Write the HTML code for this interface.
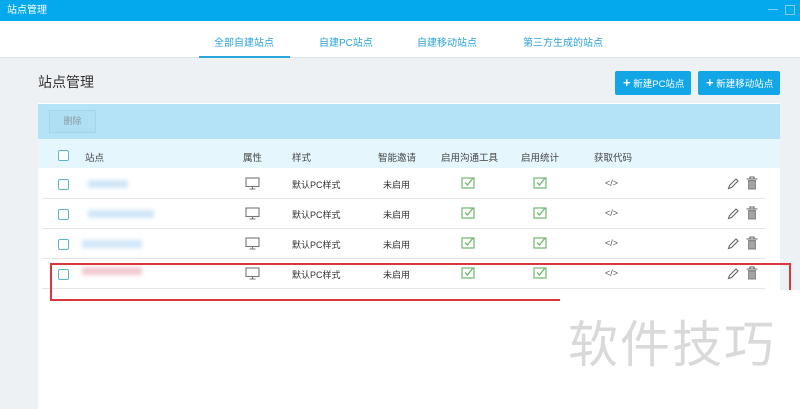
<!DOCTYPE html>
<html><head><meta charset="utf-8"><style>
*{margin:0;padding:0;box-sizing:border-box}
body{width:800px;height:409px;overflow:hidden;background:#eef1f4;font-family:"Liberation Sans","Noto Sans CJK SC",sans-serif;font-size:10px;color:#333;position:relative}
.a{position:absolute}
.tb{left:0;top:0;width:800px;height:21px;background:#03a9ec;color:#fff;font-size:10px;line-height:21px;padding-left:7px}
.tabs{left:0;top:21px;width:800px;height:37px;background:#fff;border-bottom:1px solid #dde3e8}
.tab{top:34px;color:#2aa2d8;font-size:10px}
.btn{top:71px;height:24px;background:#13a6e6;color:#fff;border-radius:2px;font-size:9.5px;line-height:24px}
.panel{left:38px;top:103px;width:742px;height:306px;background:#fff}
.cb{width:11px;height:11px;border:1.3px solid #5bb8c2;border-radius:2px;background:#fff}
.line{height:1px;background:#e3e6e8;left:42px;width:723px}
.blur{background:#cfe6f7;filter:blur(2px);height:8px}
.h{top:150px;font-size:9.5px;color:#444}
</style></head><body>
<div class="a tb">站点管理</div>
<div class="a" style="right:22px;top:9px;width:10px;height:1px;background:#7fd0f3"></div>
<div class="a" style="right:5px;top:5px;width:10px;height:10px;border:1px solid #7fd0f3"></div>
<div class="a tabs"></div>
<div class="a tab" style="left:214px">全部自建站点</div>
<div class="a tab" style="left:319px">自建PC站点</div>
<div class="a tab" style="left:417px">自建移动站点</div>
<div class="a tab" style="left:523px">第三方生成的站点</div>
<div class="a" style="left:199px;top:56px;width:91px;height:2px;background:#2ba3db"></div>
<div class="a" style="left:38px;top:72px;font-size:14px;color:#333">站点管理</div>
<div class="a btn" style="left:615px;width:76px;padding-left:8px"><b style="font-size:13px">+</b> 新建PC站点</div>
<div class="a btn" style="left:698px;width:82px;padding-left:8px"><b style="font-size:13px">+</b> 新建移动站点</div>
<div class="a panel"></div>
<div class="a" style="left:38px;top:104px;width:742px;height:35px;background:#b4e3f7"></div>
<div class="a" style="left:49px;top:110px;width:47px;height:23px;background:#aedff2;border:1px solid #a3d5ea;color:#8a9aa4;font-size:9px;line-height:21px;text-align:center">删除</div>
<div class="a" style="left:38px;top:139px;width:742px;height:29px;background:#e6f6fd"></div>
<div class="a cb" style="left:58px;top:150px"></div>
<div class="a h" style="left:85px">站点</div>
<div class="a h" style="left:243px">属性</div>
<div class="a h" style="left:292px">样式</div>
<div class="a h" style="left:378px">智能邀请</div>
<div class="a h" style="left:441px">启用沟通工具</div>
<div class="a h" style="left:521px">启用统计</div>
<div class="a h" style="left:594px">获取代码</div>
<div class="a line" style="top:198px"></div>
<div class="a line" style="top:228px"></div>
<div class="a line" style="top:258px"></div>
<div class="a line" style="top:288px"></div>
<div class="a blur" style="left:88px;top:180px;width:40px"></div>
<div class="a blur" style="left:88px;top:210px;width:66px"></div>
<div class="a blur" style="left:82px;top:240px;width:60px"></div>
<div class="a blur" style="left:82px;top:267px;width:60px;background:#f0c8d0"></div>

<div class="a" id="r1" style="left:0;top:168px;width:800px;height:30px">
<div class="a cb" style="left:58px;top:11px"></div>
<svg class="a" style="left:245px;top:9px" width="15" height="13" viewBox="0 0 15 13"><rect x="1" y="1" width="13" height="8.5" fill="none" stroke="#777" stroke-width="1.1"/><path d="M7.5 9.5v2M4.5 12h6" stroke="#777" stroke-width="1.1"/></svg>
<div class="a" style="left:292px;top:10px;font-size:9px">默认PC样式</div>
<div class="a" style="left:383px;top:10px;font-size:9px">未启用</div>
<svg class="a" style="left:461px;top:8px" width="14" height="13" viewBox="0 0 14 13"><rect x="1" y="2" width="12" height="10" fill="none" stroke="#6fb56f" stroke-width="1.2"/><path d="M4 6.5l2.5 2.5L12 2" fill="none" stroke="#6fb56f" stroke-width="1.3"/></svg>
<svg class="a" style="left:533px;top:8px" width="14" height="13" viewBox="0 0 14 13"><rect x="1" y="2" width="12" height="10" fill="none" stroke="#6fb56f" stroke-width="1.2"/><path d="M4 6.5l2.5 2.5L12 2" fill="none" stroke="#6fb56f" stroke-width="1.3"/></svg>
<div class="a" style="left:605px;top:10px;font-size:9px;color:#555">&lt;/&gt;</div>
<svg class="a" style="left:727px;top:10px" width="12" height="12" viewBox="0 0 12 12"><path d="M1.5 10.5l1-3L9 1l2 2-6.5 6.5z" fill="none" stroke="#666" stroke-width="1.1"/></svg>
<svg class="a" style="left:746px;top:8px" width="12" height="14" viewBox="0 0 12 14"><path d="M0.5 3h11M4 3V1h4v2" fill="none" stroke="#666" stroke-width="1.1"/><rect x="2" y="4" width="8" height="9.5" fill="#888"/><path d="M4 5.5v6.5M6 5.5v6.5M8 5.5v6.5" stroke="#ccc" stroke-width=".8"/></svg>
</div>
<div class="a" id="r2" style="left:0;top:198px;width:800px;height:30px"></div>
<div class="a" id="r3" style="left:0;top:228px;width:800px;height:30px"></div>
<div class="a" id="r4" style="left:0;top:258px;width:800px;height:30px"></div>
<script>
var src=document.getElementById('r1').innerHTML;
['r2','r3','r4'].forEach(function(i){document.getElementById(i).innerHTML=src;});
</script>
<div class="a" style="left:50px;top:263px;width:741px;height:2px;background:#d9363e"></div>
<div class="a" style="left:50px;top:263px;width:2px;height:38px;background:#d9363e"></div>
<div class="a" style="left:789px;top:263px;width:2px;height:27px;background:#d9363e"></div>
<div class="a" style="left:50px;top:299px;width:510px;height:2px;background:#d9363e"></div>
<div class="a" style="left:560px;top:290px;width:240px;height:119px;background:#fff"></div>
<div class="a" style="left:568px;top:316px;font-size:50px;color:#d9d9d9;letter-spacing:2px;font-family:'Noto Sans CJK SC',sans-serif;line-height:1">软件技巧</div>
</body></html>
